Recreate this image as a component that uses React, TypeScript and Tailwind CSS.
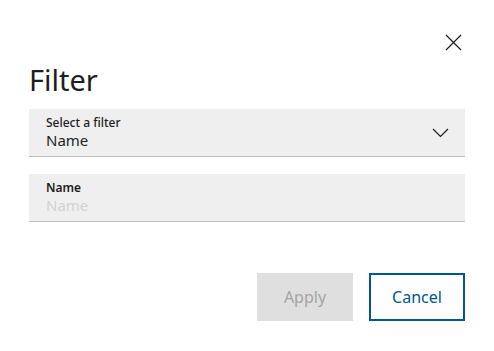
import React from "react";

export default function App() {
  return (
    <div className="w-[494px] h-[351px] bg-white text-[#1d1d1d] font-['Noto_Sans',sans-serif] relative">
      <div className="px-[29px] pt-[32px]">
        <div className="flex justify-end pr-[2px]">
          <button className="w-[20px] h-[20px] flex items-center justify-center" aria-label="Close">
            <svg width="17" height="17" viewBox="0 0 17 17" fill="none" stroke="#1d1d1d" strokeWidth="1.2">
              <path d="M1 1 L16 16 M16 1 L1 16" />
            </svg>
          </button>
        </div>
        <h2 className="text-[29px] leading-[34px] mt-[11px] font-normal">Filter</h2>
        <div className="mt-[12px] flex flex-col gap-[17px]">
          <div className="h-[48px] bg-[#efefef] border-b border-[#bfbfbf] flex items-center justify-between pl-[17px] pr-[16px]">
            <div className="flex flex-col">
              <span className="text-[12px] leading-[14px] font-medium">Select a filter</span>
              <span className="text-[15px] leading-[20px]">Name</span>
            </div>
            <svg width="17" height="10" viewBox="0 0 17 10" fill="none" stroke="#1d1d1d" strokeWidth="1.2">
              <path d="M1 1 L8.5 8.5 L16 1" />
            </svg>
          </div>
          <div className="h-[48px] bg-[#efefef] border-b border-[#bfbfbf] flex flex-col justify-center pl-[17px]">
            <span className="text-[12px] leading-[14px] font-semibold">Name</span>
            <span className="text-[15px] leading-[20px] text-[#d2d2d2]">Name</span>
          </div>
        </div>
        <div className="mt-[51px] flex justify-end gap-[16px]">
          <button className="w-[96px] h-[48px] bg-[#dfdfdf] text-[#a4a4a4] text-[16px]">Apply</button>
          <button className="w-[96px] h-[48px] border-2 border-[#005691] text-[#005691] text-[16px]">Cancel</button>
        </div>
      </div>
    </div>
  );
}
